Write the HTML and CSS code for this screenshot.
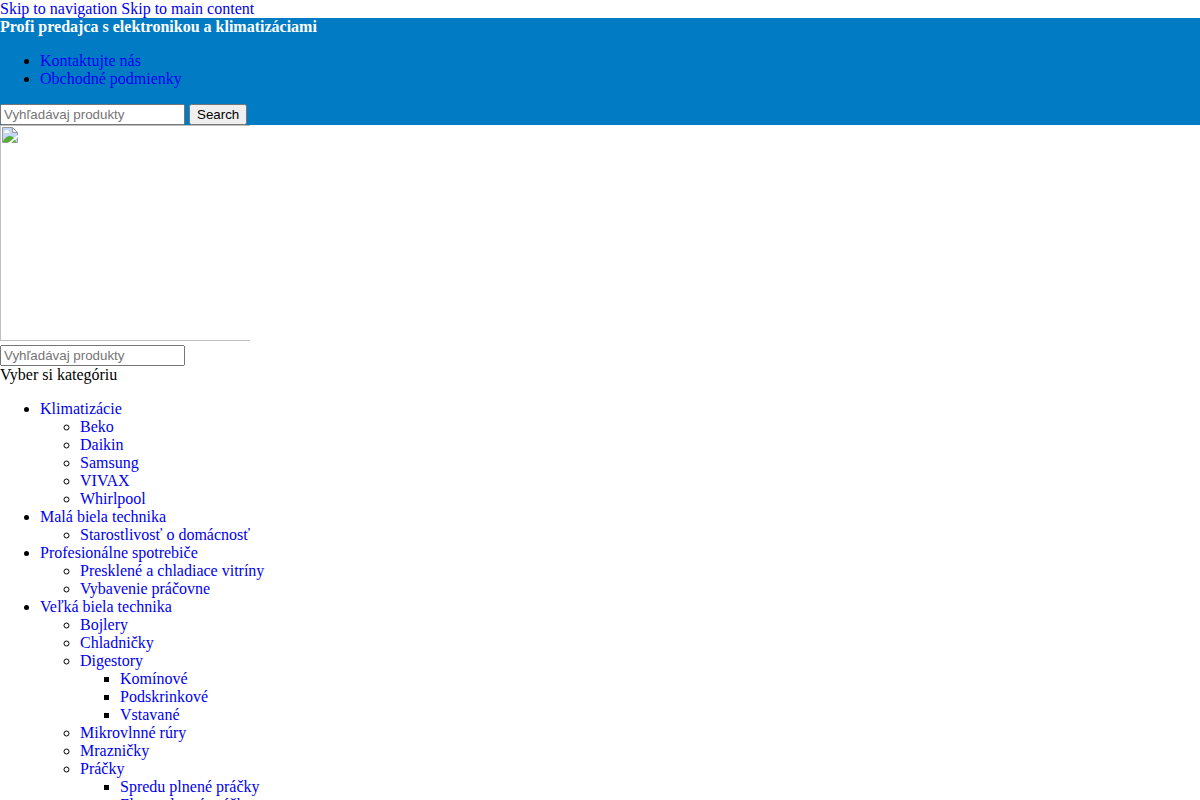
FILE: index.html
```html
<!DOCTYPE html>
<html lang="sk">

<head>
  <meta charset="UTF-8">
  <meta name="viewport" content="width=device-width, initial-scale=1.0">
  <title>Profi predajca s elektronikou a klimatizáciami</title>
  <link rel="stylesheet" href="styles.css">
</head>

<body>
  <a class="skip-link" href="#navigation">Skip to navigation</a>
  <a class="skip-link" href="#main-content">Skip to main content</a>

  <header>
    <div class="top-bar">
      <strong class="slogan">Profi predajca s elektronikou a klimatizáciami</strong>
      <ul class="menu">
        <li><a href="#">Kontaktujte nás</a></li>
        <li><a href="#">Obchodné podmienky</a></li>
      </ul>
      <form class="search-form">
        <input type="text" name="s" placeholder="Vyhľadávaj produkty" aria-label="Vyhľadávaj produkty">
        <button type="submit">Search</button>
      </form>
    </div>

    <a class="logo" href="#" aria-label="Logo">
      <svg class="logo-icon" viewBox="0 0 16 16" aria-hidden="true">
        <path d="M1 1H11L15 5V15H1Z" fill="#c3d8f7"/>
        <path d="M2 6V5L3 4L4 3H6L7 5L8 6Z" fill="#fff"/>
        <path d="M1 15V14C3 11 5 9 8 9C11 9 13 12 14 15Z" fill="#55ad36"/>
        <path d="M0.5 0.5H10.5L15.5 5.5V15.5H0.5Z" fill="none" stroke="#999"/>
        <path d="M10.5 0.5V5.5H15.5Z" fill="#f4f4f4" stroke="#999"/>
        <path d="M16 8V10L9 16H6Z" fill="#fff"/>
      </svg>
    </a>

    <form class="search-form">
      <input type="text" name="s" placeholder="Vyhľadávaj produkty" aria-label="Vyhľadávaj produkty">
    </form>
  </header>

  <nav id="navigation">
    <span>Vyber si kategóriu</span>
    <ul class="menu">
      <li><a href="#">Klimatizácie</a>
        <ul>
          <li><a href="#">Beko</a></li>
          <li><a href="#">Daikin</a></li>
          <li><a href="#">Samsung</a></li>
          <li><a href="#">VIVAX</a></li>
          <li><a href="#">Whirlpool</a></li>
        </ul>
      </li>
      <li><a href="#">Malá biela technika</a>
        <ul>
          <li><a href="#">Starostlivosť o domácnosť</a></li>
        </ul>
      </li>
      <li><a href="#">Profesionálne spotrebiče</a>
        <ul>
          <li><a href="#">Presklené a chladiace vitríny</a></li>
          <li><a href="#">Vybavenie práčovne</a></li>
        </ul>
      </li>
      <li><a href="#">Veľká biela technika</a>
        <ul>
          <li><a href="#">Bojlery</a></li>
          <li><a href="#">Chladničky</a></li>
          <li><a href="#">Digestory</a>
            <ul>
              <li><a href="#">Komínové</a></li>
              <li><a href="#">Podskrinkové</a></li>
              <li><a href="#">Vstavané</a></li>
            </ul>
          </li>
          <li><a href="#">Mikrovlnné rúry</a></li>
          <li><a href="#">Mrazničky</a></li>
          <li><a href="#">Práčky</a>
            <ul>
              <li><a href="#">Spredu plnené práčky</a></li>
              <li><a href="#">Zhora plnené práčky</a></li>
            </ul>
          </li>
        </ul>
      </li>
    </ul>
  </nav>

  <main id="main-content"></main>
</body>

</html>
```

FILE: styles.css
```css
body {
  margin: 0;
  font-family: "Liberation Serif", "Times New Roman", serif;
  font-size: 16px;
  line-height: 18px;
  color: #000;
  background-color: #fff;
}

a {
  color: #0000ee;
  text-decoration: none;
}

.top-bar {
  background-color: #007bc4;
}

.slogan {
  color: #fff;
}

.menu {
  margin: 16px 0;
  padding-left: 40px;
}

.menu ul {
  margin: 0;
  padding-left: 40px;
}

.search-form {
  display: flex;
  gap: 4px;
}

.search-form input,
.search-form button {
  box-sizing: border-box;
  height: 21px;
  font-family: "Liberation Sans", Arial, sans-serif;
}

.search-form input {
  width: 185px;
}

/* Logo frame, open on the right side */
.logo {
  display: block;
  box-sizing: border-box;
  width: 250px;
  height: 216px;
  margin-bottom: 4px;
  padding: 1px;
  border: 1px solid #c0c0c0;
  border-right: none;
}

.logo-icon {
  display: block;
  width: 16px;
  height: 16px;
}
```
